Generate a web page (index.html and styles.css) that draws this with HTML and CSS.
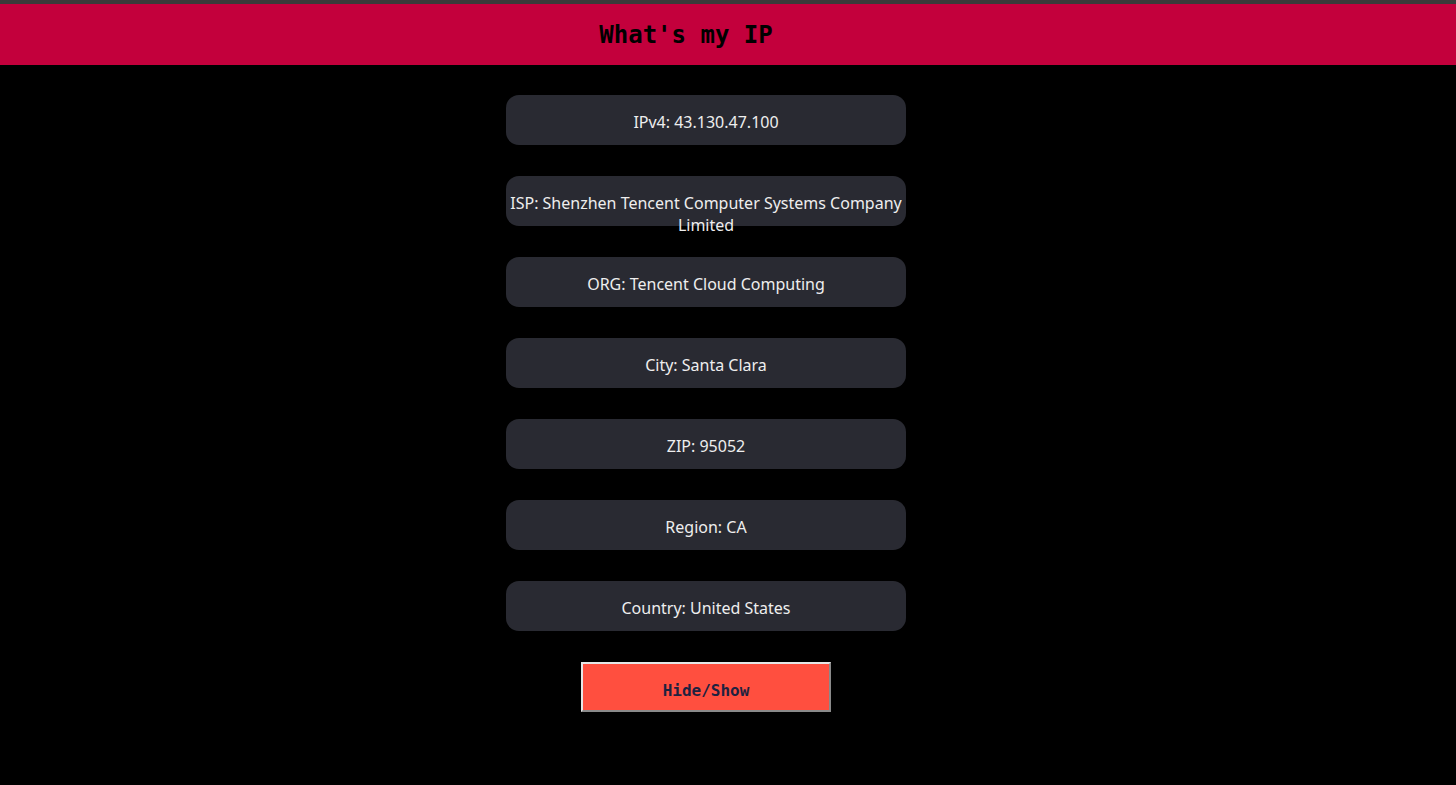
FILE: index.html
```html
<!DOCTYPE html>
<html lang="en">
<head>
<meta charset="utf-8">
<title>What's my IP</title>
<link rel="stylesheet" href="styles.css">
</head>
<body>
<div class="topline"></div>
<header class="header">
  <h1 class="title">What's my IP</h1>
</header>
<main class="content">
  <div class="card">IPv4: 43.130.47.100</div>
  <div class="card">ISP: Shenzhen Tencent Computer Systems Company Limited</div>
  <div class="card">ORG: Tencent Cloud Computing</div>
  <div class="card">City: Santa Clara</div>
  <div class="card">ZIP: 95052</div>
  <div class="card">Region: CA</div>
  <div class="card">Country: United States</div>
  <button class="toggle" type="button">Hide/Show</button>
</main>
</body>
</html>
```
FILE: styles.css
```css
html, body {
  margin: 0;
  padding: 0;
  background: #000;
  height: 100%;
}
body {
  font-family: "Noto Sans", "Open Sans", sans-serif;
}
.topline {
  height: 4px;
  background: #3a3a3a;
}
.header {
  height: 61px;
  background: #c3003c;
  display: flex;
  align-items: center;
  justify-content: center;
  padding-right: 84px;
}
.title {
  margin: 0;
  font-family: "DejaVu Sans Mono", monospace;
  font-size: 24px;
  font-weight: bold;
  color: #000;
}
.content {
  display: flex;
  flex-direction: column;
  align-items: center;
  gap: 31px;
  padding-top: 30px;
  padding-right: 44px;
}
.card {
  box-sizing: border-box;
  width: 400px;
  height: 50px;
  padding: 16px 4px 0;
  background: #292a32;
  border-radius: 13px;
  color: #eeeeee;
  font-size: 16px;
  line-height: 22px;
  text-align: center;
}
.toggle {
  box-sizing: border-box;
  width: 250px;
  height: 50px;
  background: #ff4f3f;
  border: 2px solid;
  border-color: #e6e6e6 #8a8a8a #8a8a8a #e6e6e6;
  font-family: "DejaVu Sans Mono", monospace;
  font-weight: bold;
  font-size: 16px;
  color: #1e2240;
  padding-top: 7px;
}
```
